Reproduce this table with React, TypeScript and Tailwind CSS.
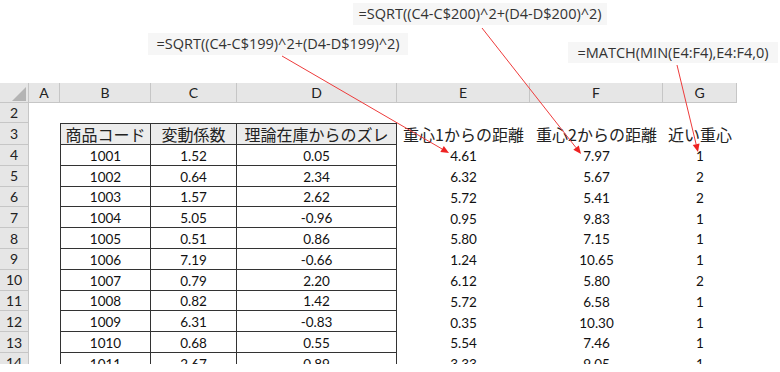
import React from "react";

const DATA: [string, string, string, string, string, string][] = [
  ["1001", "1.52", "0.05", "4.61", "7.97", "1"],
  ["1002", "0.64", "2.34", "6.32", "5.67", "2"],
  ["1003", "1.57", "2.62", "5.72", "5.41", "2"],
  ["1004", "5.05", "-0.96", "0.95", "9.83", "1"],
  ["1005", "0.51", "0.86", "5.80", "7.15", "1"],
  ["1006", "7.19", "-0.66", "1.24", "10.65", "1"],
  ["1007", "0.79", "2.20", "6.12", "5.80", "2"],
  ["1008", "0.82", "1.42", "5.72", "6.58", "1"],
  ["1009", "6.31", "-0.83", "0.35", "10.30", "1"],
  ["1010", "0.68", "0.55", "5.54", "7.46", "1"],
  ["1011", "2.67", "0.89", "3.33", "9.05", "1"],
];

const HEAD_COLS = [
  { l: "A", w: "w-[31px]" },
  { l: "B", w: "w-[91px]" },
  { l: "C", w: "w-[86px]" },
  { l: "D", w: "w-[160px]" },
  { l: "E", w: "w-[133px]" },
  { l: "F", w: "w-[133px]" },
  { l: "G", w: "w-[74px]" },
];

const NUM = "font-['Lato','Open_Sans',sans-serif] text-[13.5px] text-[#111]";
const JP = "font-['Noto_Sans_CJK_JP','Noto_Sans',sans-serif] text-[16px] text-[#222] leading-none whitespace-nowrap";

function Arrow({ x1, y1, x2, y2 }: { x1: number; y1: number; x2: number; y2: number }) {
  const dx = x2 - x1;
  const dy = y2 - y1;
  const len = Math.sqrt(dx * dx + dy * dy);
  const ux = dx / len;
  const uy = dy / len;
  const hl = 8;
  const hw = 3.5;
  const bx = x2 - ux * hl;
  const by = y2 - uy * hl;
  return (
    <g>
      <line x1={x1} y1={y1} x2={bx} y2={by} stroke="#ee3b3b" strokeWidth={1} />
      <polygon
        points={`${x2},${y2} ${bx - uy * hw},${by + ux * hw} ${bx + uy * hw},${by - ux * hw}`}
        fill="#ee2222"
      />
    </g>
  );
}

function Formula({ text, className }: { text: string; className: string }) {
  return (
    <div
      className={`absolute flex items-center justify-center bg-[#f6f6f6] font-['Open_Sans','Noto_Sans',sans-serif] text-[14.5px] text-[#333] whitespace-nowrap ${className}`}
    >
      {text}
    </div>
  );
}

function RowHead({ n, h }: { n: number; h: string }) {
  return (
    <div
      className={`w-[29px] shrink-0 ${h} bg-[#e6e6e6] border-r border-b border-[#c6c6c6] flex items-center justify-center font-['Lato','Open_Sans',sans-serif] text-[14px] text-[#222]`}
    >
      {n}
    </div>
  );
}

export default function App() {
  return (
    <div className="relative w-[780px] h-[372px] bg-white overflow-hidden">
      <Formula text="=SQRT((C4-C$200)^2+(D4-D$200)^2)" className="left-[353px] top-[3px] w-[254px] h-[22px]" />
      <Formula text="=SQRT((C4-C$199)^2+(D4-D$199)^2)" className="left-[148px] top-[33px] w-[260px] h-[22px]" />
      <Formula text="=MATCH(MIN(E4:F4),E4:F4,0)" className="left-[568px] top-[42px] w-[210px] h-[21px]" />

      <div className="pt-[83px]">
        <div className="w-[737px] h-[281px] overflow-hidden">
          {/* column header */}
          <div className="flex h-[20px] bg-[#e6e6e6] border-b border-[#c6c6c6]">
            <div className="relative w-[29px] h-full border-r border-[#c6c6c6]">
              <svg width="29" height="20" className="absolute left-0 top-0">
                <polygon points="26,4 26,18 12,18" fill="#b4b4b4" />
              </svg>
            </div>
            {HEAD_COLS.map((c) => (
              <div
                key={c.l}
                className={`${c.w} flex items-center justify-center h-full border-r border-[#c6c6c6] font-['Lato','Open_Sans',sans-serif] text-[14px] text-[#222]`}
              >
                {c.l}
              </div>
            ))}
          </div>

          {/* row 2 */}
          <div className="flex h-[20px]">
            <RowHead n={2} h="h-[20px]" />
            <div className="flex-1" />
          </div>

          {/* row 3: headers */}
          <div className="flex h-[22px]">
            <RowHead n={3} h="h-[22px]" />
            <div className="w-[31px] shrink-0" />
            <div className={`w-[91px] shrink-0 h-full bg-[#ececec] border border-[#333] flex items-center justify-center ${JP}`}>
              商品コード
            </div>
            <div className={`w-[86px] shrink-0 h-full bg-[#ececec] border-y border-r border-[#333] flex items-center justify-center ${JP}`}>
              変動係数
            </div>
            <div className={`w-[160px] shrink-0 h-full bg-[#ececec] border-y border-r border-[#333] flex items-center justify-center ${JP}`}>
              理論在庫からのズレ
            </div>
            <div className={`w-[133px] shrink-0 h-full flex items-center justify-center ${JP}`}>重心1からの距離</div>
            <div className={`w-[133px] shrink-0 h-full flex items-center justify-center ${JP}`}>重心2からの距離</div>
            <div className={`w-[74px] shrink-0 h-full flex items-center justify-center ${JP}`}>近い重心</div>
          </div>

          {DATA.map((d, i) => (
            <div key={i} className="flex h-[20.8px]">
              <RowHead n={i + 4} h="h-[20.8px]" />
              <div className="w-[31px] shrink-0" />
              <div className={`w-[91px] shrink-0 h-full border-x border-b border-[#333] flex items-center justify-center pt-[2px] ${NUM}`}>
                {d[0]}
              </div>
              <div className={`w-[86px] shrink-0 h-full border-r border-b border-[#333] flex items-center justify-center pt-[2px] ${NUM}`}>
                {d[1]}
              </div>
              <div className={`w-[160px] shrink-0 h-full border-r border-b border-[#333] flex items-center justify-center pt-[2px] ${NUM}`}>
                {d[2]}
              </div>
              <div className={`w-[133px] shrink-0 h-full flex items-center justify-center pt-[2px] ${NUM}`}>{d[3]}</div>
              <div className={`w-[133px] shrink-0 h-full flex items-center justify-center pt-[2px] ${NUM}`}>{d[4]}</div>
              <div className={`w-[74px] shrink-0 h-full flex items-center justify-center pt-[2px] ${NUM}`}>{d[5]}</div>
            </div>
          ))}
        </div>
      </div>

      <svg className="absolute left-0 top-0 pointer-events-none" width="780" height="372">
        <Arrow x1={282} y1={56} x2={449} y2={153} />
        <Arrow x1={482} y1={28} x2={581} y2={154} />
        <Arrow x1={677} y1={65} x2={698} y2={152} />
      </svg>
    </div>
  );
}
